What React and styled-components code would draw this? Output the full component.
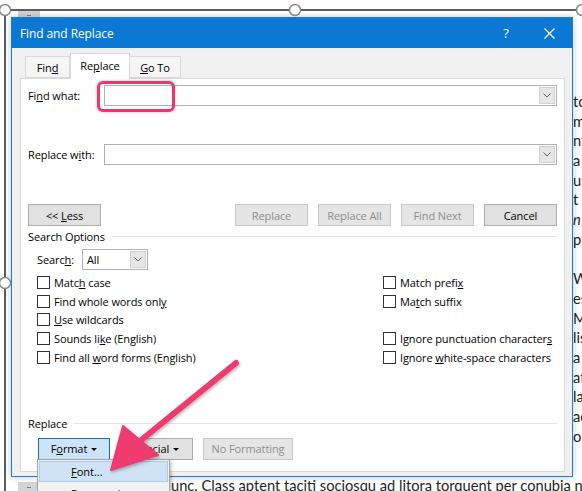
import styled, { createGlobalStyle } from "styled-components";

const GlobalStyle = createGlobalStyle`
  html, body {
    margin: 0;
    padding: 0;
    background: #fff;
  }
  body {
    font-family: "Open Sans", "Noto Sans", sans-serif;
  }
`;

const Screen = styled.div`
  position: relative;
  width: 582px;
  height: 491px;
  overflow: hidden;
  background: #fff;
`;

/* document text behind the dialog */
const DocColumn = styled.div`
  position: absolute;
  left: 573px;
  top: 92px;
  font-family: Lato, "Liberation Sans", sans-serif;
  font-size: 14.67px;
  line-height: 19.7px;
  color: #1e1e1e;
  white-space: nowrap;
`;

const DocLine = styled.div`
  height: 19.7px;
  font-style: ${(p) => (p.$italic ? "italic" : "normal")};
`;

const DocBottomLine = styled.div`
  position: absolute;
  left: 171px;
  top: 477px;
  font-family: Lato, "Liberation Sans", sans-serif;
  font-size: 14.67px;
  line-height: 18px;
  color: #1e1e1e;
  white-space: nowrap;
`;

const Nub = styled.div`
  position: absolute;
  left: 18px;
  top: ${(p) => p.$top}px;
  width: 22px;
  height: ${(p) => p.$h}px;
  background: #d4d4d4;
  &::after {
    content: "";
    position: absolute;
    left: 9px;
    top: ${(p) => p.$h / 2}px;
    width: 4px;
    height: 1px;
    background: #777;
  }
`;

const Overlay = styled.svg`
  position: absolute;
  left: 0;
  top: 0;
  pointer-events: none;
`;

/* dialog window */
const Dialog = styled.div`
  position: absolute;
  left: 11px;
  top: 17px;
  width: 562px;
  height: 460px;
  box-sizing: border-box;
  border: 1px solid #1a7fd6;
  background: #f0f0f0;
  box-shadow: 0 0 7px rgba(0, 0, 0, 0.22);
  display: flex;
  flex-direction: column;
  font-family: "Open Sans", "Noto Sans", sans-serif;
  font-size: 11px;
  letter-spacing: -0.1px;
  color: #000;
`;

const TitleBar = styled.div`
  height: 30px;
  flex: none;
  display: flex;
  align-items: center;
  padding-left: 8px;
  background: #0b78d3;
  color: #fff;
  font-size: 12px;
`;

const TitleButton = styled.div`
  width: ${(p) => p.$w}px;
  height: 30px;
  display: flex;
  align-items: center;
  justify-content: center;
  font-size: 13px;
  &:first-of-type {
    margin-left: auto;
  }
`;

const Body = styled.div`
  flex: 1;
  display: flex;
  flex-direction: column;
  padding: 5px 7px 4px 8px;
`;

const Tabs = styled.div`
  display: flex;
  align-items: flex-end;
  height: 25px;
  padding-left: 5px;
  position: relative;
  z-index: 1;
`;

const Tab = styled.div`
  width: ${(p) => p.$w}px;
  height: ${(p) => (p.$active ? 26 : 22)}px;
  margin-bottom: ${(p) => (p.$active ? -1 : 0)}px;
  box-sizing: border-box;
  border: 1px solid #d9d9d9;
  border-bottom: ${(p) => (p.$active ? "none" : "1px solid #d9d9d9")};
  border-left: ${(p) => (p.$first || p.$active ? "1px solid #d9d9d9" : "none")};
  background: ${(p) => (p.$active ? "#fff" : "#f5f5f5")};
  display: flex;
  align-items: center;
  justify-content: center;
  padding-bottom: ${(p) => (p.$active ? 2 : 0)}px;
`;

const Panel = styled.div`
  flex: 1;
  box-sizing: border-box;
  border: 1px solid #d9d9d9;
  background: #fff;
  padding: 6px 7px 11px 7px;
  display: flex;
  flex-direction: column;
`;

const FieldRow = styled.div`
  position: relative;
  display: flex;
  align-items: center;
  height: 21px;
  margin-top: ${(p) => p.$mt || 0}px;
`;

const FieldLabel = styled.div`
  width: ${(p) => p.$w}px;
  flex: none;
`;

const Combo = styled.div`
  flex: ${(p) => (p.$w ? "none" : 1)};
  width: ${(p) => (p.$w ? `${p.$w}px` : "auto")};
  height: 21px;
  box-sizing: border-box;
  border: 1px solid #b1b1b1;
  background: #fff;
  display: flex;
  align-items: center;
  padding: 1px 1px 1px 4px;
`;

const ComboArrow = styled.div`
  margin-left: auto;
  width: 16px;
  height: 17px;
  box-sizing: border-box;
  border: 1px solid #d0d0d0;
  background: #e6e6e6;
  display: flex;
  align-items: center;
  justify-content: center;
  color: #606060;
`;

const Highlight = styled.div`
  position: absolute;
  left: 69px;
  top: -4px;
  width: 78px;
  height: 31px;
  box-sizing: border-box;
  border: 3px solid #e9386e;
  border-radius: 6px;
  box-shadow: 0 0 3px rgba(233, 56, 110, 0.45);
`;

const ButtonRow = styled.div`
  display: flex;
  justify-content: ${(p) => p.$justify || "space-between"};
  margin-top: ${(p) => p.$mt || 0}px;
  margin-left: ${(p) => p.$ml || 0}px;
  gap: 10px;
`;

const ButtonGroup = styled.div`
  display: flex;
  gap: 10px;
`;

const Button = styled.button`
  width: ${(p) => p.$w || 73}px;
  height: 22px;
  box-sizing: border-box;
  padding: 0;
  border: 1px solid ${(p) => (p.$pressed ? "#1c6fb5" : "#adadad")};
  background: ${(p) => (p.$pressed ? "#cce4f7" : "#e1e1e1")};
  font-family: inherit;
  font-size: 11px;
  letter-spacing: inherit;
  color: #000;
  display: flex;
  align-items: center;
  justify-content: center;
  gap: 4px;
  &:disabled {
    border-color: #c8c8c8;
    background: #e5e5e5;
    color: #8e8e8e;
  }
`;

const Caret = styled.span`
  width: 0;
  height: 0;
  border-left: 3px solid transparent;
  border-right: 3px solid transparent;
  border-top: 3px solid #000;
  margin-top: 1px;
`;

const SectionHead = styled.div`
  display: flex;
  align-items: center;
  height: 14px;
  margin-top: ${(p) => p.$mt}px;
  &::after {
    content: "";
    flex: 1;
    margin-left: 7px;
    border-top: 1px solid #e3e3e3;
  }
`;

const SearchRow = styled.div`
  display: flex;
  align-items: center;
  height: 21px;
  margin: 6px 0 0 9px;
`;

const OptionsGrid = styled.div`
  display: grid;
  grid-template-columns: 346px 1fr;
  grid-auto-rows: 18.7px;
  margin: 3px 0 0 9px;
`;

const Check = styled.label`
  display: flex;
  align-items: center;
  gap: 4px;
  white-space: nowrap;
`;

const Box = styled.span`
  width: 13px;
  height: 13px;
  box-sizing: border-box;
  border: 1px solid #333;
  background: #fff;
  flex: none;
`;

/* dropdown menu opened from Format */
const Menu = styled.div`
  position: absolute;
  left: 37px;
  top: 459px;
  width: 133px;
  height: 40px;
  box-sizing: border-box;
  border: 1px solid #a0a0a0;
  background: #f2f2f2;
  padding: 1px;
  font-family: "Open Sans", "Noto Sans", sans-serif;
  font-size: 11px;
  box-shadow: 2px 2px 3px rgba(0, 0, 0, 0.2);
`;

const MenuItem = styled.div`
  height: 21px;
  box-sizing: border-box;
  border: 1px solid ${(p) => (p.$active ? "#a9cbee" : "transparent")};
  background: ${(p) => (p.$active ? "#cfe2f6" : "transparent")};
  padding-left: 31px;
  display: flex;
  align-items: center;
  margin-bottom: 1px;
`;

const Chevron = () => (
  <svg width="8" height="5" viewBox="0 0 8 5">
    <path d="M0.5 0.5 L4 4 L7.5 0.5" fill="none" stroke="currentColor" strokeWidth="1" />
  </svg>
);

const rightLines = [
  "to", "m", "nt", "a", "us", "t", "n", "pu", "",
  "W", "es", "M", "lis", "a", "at", "la", "ae", "or",
];

const leftOptions = [
  <>Matc<u>h</u> case</>,
  <>Find whole words onl<u>y</u></>,
  <><u>U</u>se wildcards</>,
  <>Sounds li<u>k</u>e (English)</>,
  <>Find all <u>w</u>ord forms (English)</>,
];

const rightOptions = [
  <>Match prefi<u>x</u></>,
  <>Ma<u>t</u>ch suffix</>,
  null,
  <>Ignore punctuation character<u>s</u></>,
  <>Ignore <u>w</u>hite-space characters</>,
];

export default function App() {
  return (
    <Screen>
      <GlobalStyle />

      <DocColumn>
        {rightLines.map((t, i) => (
          <DocLine key={i} $italic={t === "n"}>{t}</DocLine>
        ))}
      </DocColumn>
      <DocBottomLine>
        unc. Class aptent taciti sociosqu ad litora torquent per conubia nostra
      </DocBottomLine>
      <Nub $top={11} $h={7} />
      <Nub $top={482} $h={9} />

      <Overlay width="582" height="491">
        <path d="M5 10 H582 M5 10 V491" stroke="#2a2a2a" strokeWidth="1.5" fill="none" />
      </Overlay>

      <Dialog>
        <TitleBar>
          Find and Replace
          <TitleButton $w={40}>?</TitleButton>
          <TitleButton $w={46}>
            <svg width="11" height="11" viewBox="0 0 11 11">
              <path d="M0.5 0.5 L10.5 10.5 M10.5 0.5 L0.5 10.5" stroke="#fff" strokeWidth="1.2" />
            </svg>
          </TitleButton>
        </TitleBar>
        <Body>
          <Tabs>
            <Tab $w={45} $first><span>Fin<u>d</u></span></Tab>
            <Tab $w={60} $active><span>Re<u>p</u>lace</span></Tab>
            <Tab $w={51}><span><u>G</u>o To</span></Tab>
          </Tabs>
          <Panel>
            <FieldRow>
              <FieldLabel $w={76}>Fi<u>n</u>d what:</FieldLabel>
              <Combo>
                <ComboArrow><Chevron /></ComboArrow>
              </Combo>
              <Highlight />
            </FieldRow>
            <FieldRow $mt={38}>
              <FieldLabel $w={76}>Replace w<u>i</u>th:</FieldLabel>
              <Combo>
                <ComboArrow><Chevron /></ComboArrow>
              </Combo>
            </FieldRow>

            <ButtonRow $mt={39}>
              <Button><span>&lt;&lt; <u>L</u>ess</span></Button>
              <ButtonGroup>
                <Button disabled>Replace</Button>
                <Button disabled>Replace All</Button>
                <Button disabled>Find Next</Button>
                <Button>Cancel</Button>
              </ButtonGroup>
            </ButtonRow>

            <SectionHead $mt={3}>Search Options</SectionHead>
            <SearchRow>
              <FieldLabel $w={45}>Searc<u>h</u>:</FieldLabel>
              <Combo $w={66}>
                <span>All</span>
                <ComboArrow><Chevron /></ComboArrow>
              </Combo>
            </SearchRow>

            <OptionsGrid>
              {leftOptions.map((opt, i) => [
                <Check key={`l${i}`}><Box /><span>{opt}</span></Check>,
                rightOptions[i] ? (
                  <Check key={`r${i}`}><Box /><span>{rightOptions[i]}</span></Check>
                ) : (
                  <span key={`r${i}`} />
                ),
              ])}
            </OptionsGrid>

            <SectionHead $mt={50.5}>Replace</SectionHead>
            <ButtonRow $mt={7} $ml={10} $justify="flex-start">
              <Button $w={72} $pressed><span>F<u>o</u>rmat</span><Caret /></Button>
              <Button><span>S<u>p</u>ecial</span><Caret /></Button>
              <Button $w={90} disabled>No Formatting</Button>
            </ButtonRow>
          </Panel>
        </Body>
      </Dialog>

      <Menu>
        <MenuItem $active><span><u>F</u>ont...</span></MenuItem>
        <MenuItem><span><u>P</u>aragraph...</span></MenuItem>
      </Menu>

      <Overlay width="582" height="491">
        <defs>
          <filter id="sh" x="-20%" y="-20%" width="140%" height="140%">
            <feDropShadow dx="1" dy="1.5" stdDeviation="1.5" floodColor="#000" floodOpacity="0.3" />
          </filter>
        </defs>
        <g filter="url(#sh)" fill="#ee3a70" stroke="#ee3a70">
          <path d="M236 363 L140 441" strokeWidth="6" strokeLinecap="round" fill="none" />
          <path d="M111 470 L123 426 L158 455 Z" strokeWidth="2" strokeLinejoin="round" />
        </g>
        <g fill="#fff" stroke="#8a8a8a" strokeWidth="1.5">
          <circle cx="5" cy="10" r="5.5" />
          <circle cx="295" cy="10" r="5.5" />
          <circle cx="582" cy="10" r="5.5" />
          <circle cx="5" cy="283" r="5.5" />
        </g>
      </Overlay>
    </Screen>
  );
}
